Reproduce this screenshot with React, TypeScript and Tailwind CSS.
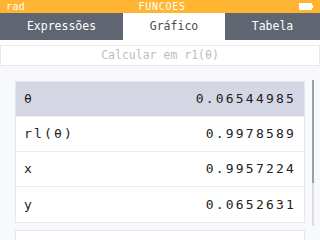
import React from "react";

const ROWS = [
  { label: "θ", value: "0.06544985", selected: true },
  { label: "rl(θ)", value: "0.9978589" },
  { label: "x", value: "0.9957224" },
  { label: "y", value: "0.0652631" },
];

const App = () => {
  return (
    <div className="relative h-[240px] w-[320px] overflow-hidden bg-[#f7f9fc] font-['DejaVu_Sans_Mono',monospace]">
      {/* Title bar */}
      <div className="flex h-[13px] items-center justify-between bg-[#ffb531] pl-[6px] pr-[7px] text-[10px] leading-none text-white">
        <span className="tracking-[0.4px]">rad</span>
        <span className="tracking-[0.7px]">FUNCOES</span>
        <div className="flex items-center">
          <div className="h-[7px] w-[13px] border border-white bg-white" />
          <div className="h-[3px] w-[1px] bg-white" />
        </div>
      </div>

      {/* Tabs */}
      <div className="flex h-[27px] bg-[#5f6671] text-[11.5px] leading-none">
        <div className="flex w-[123px] items-center justify-center text-white">Expressões</div>
        <div className="flex w-[102px] items-center justify-center bg-white text-[#4a4a52]">Gráfico</div>
        <div className="flex w-[95px] items-center justify-center text-white">Tabela</div>
      </div>

      {/* Input */}
      <div className="bg-white pt-[5px]">
        <div className="flex h-[21px] items-center justify-center border border-[#e8e8ec] text-[11.5px] text-[#bdbcc4]">
          Calcular em r1(θ)
        </div>
      </div>

      {/* Values */}
      <div className="px-[15px] pt-[15px]">
        <div className="border border-[#e6e7ed] bg-white">
          {ROWS.map((row) => (
            <div
              key={row.label}
              className={`flex h-[35px] items-center justify-between border-b border-[#ececf0] pl-[8px] pr-[8px] text-[13px] tracking-[2.2px] text-[#222] last:border-b-0 ${
                row.selected ? "bg-[#d5d6e4]" : ""
              }`}
            >
              <span>{row.label}</span>
              <span>{row.value}</span>
            </div>
          ))}
        </div>
        <div className="mt-[7px] h-[40px] border border-[#e6e7ed] bg-white pl-[8px] pt-[10px] text-[13px] tracking-[2.2px] text-[#222]">
          Tangente
        </div>
      </div>

      {/* Scrollbar */}
      <div className="absolute left-[312px] top-[80px] h-[146px] w-[2px] bg-[#dcdbe2]">
        <div className="h-[103px] w-[2px] bg-[#9e9ea6]" />
      </div>
    </div>
  );
};

export default App;
